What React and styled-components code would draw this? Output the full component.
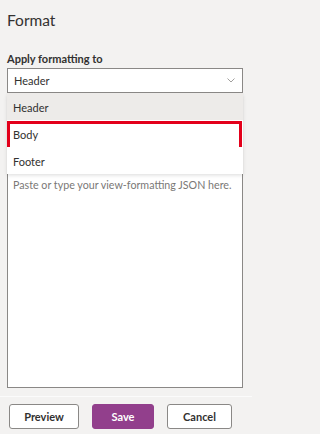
import React from "react";
import styled, { createGlobalStyle } from "styled-components";

const Global = createGlobalStyle`
  html, body { margin: 0; padding: 0; background: #f3f2f1; }
  body { font-family: "Lato", "Open Sans", sans-serif; color: #323130; }
  * { box-sizing: border-box; }
`;

const Panel = styled.div`
  width: 252px;
  height: 434px;
  background: #f3f2f1;
  display: flex;
  flex-direction: column;
  overflow: hidden;
`;

const Title = styled.h1`
  margin: 0;
  padding: 10px 0 0 7px;
  height: 50px;
  font-family: "Lato", sans-serif;
  font-weight: 400;
  font-size: 15.5px;
  line-height: 20px;
  color: #323130;
`;

const Body = styled.div`
  flex: 1;
  display: flex;
  flex-direction: column;
  padding: 0 9px 8px 7px;
  position: relative;
`;

const Label = styled.label`
  font-family: "Lato", sans-serif;
  font-weight: 700;
  font-size: 11px;
  line-height: 18px;
  color: #323130;
`;

const Select = styled.div`
  height: 25px;
  background: #fff;
  border: 1px solid #8a8886;
  display: flex;
  align-items: center;
  justify-content: space-between;
  padding: 0 7px 0 6px;
  font-family: "Lato", sans-serif;
  font-size: 11px;
  color: #323130;
`;

const Chevron = styled.svg`
  width: 8px;
  height: 5px;
  flex: none;
`;

const TextArea = styled.div`
  flex: 1;
  margin-top: 6px;
  background: #fff;
  border: 1px solid #8a8886;
  padding: 77px 5px 0 5px;
  font-family: "Lato", sans-serif;
  font-size: 10.7px;
  line-height: 16px;
  white-space: nowrap;
  color: #7a7876;
`;

const Menu = styled.ul`
  position: absolute;
  top: 43px;
  left: 7px;
  right: 9px;
  margin: 0;
  padding: 0;
  list-style: none;
  background: #fff;
  box-shadow: 0 1.6px 3.6px rgba(0,0,0,0.13), 0 0.3px 0.9px rgba(0,0,0,0.11);
  z-index: 2;
`;

const Option = styled.li`
  position: relative;
  height: 27px;
  display: flex;
  align-items: center;
  padding: 1px 6px 0;
  font-family: "Lato", sans-serif;
  font-size: 11px;
  color: #323130;
  background: ${p => (p.$selected ? "#edebe9" : "#fff")};
  &::after {
    content: "";
    display: ${p => (p.$highlight ? "block" : "none")};
    position: absolute;
    left: 0;
    right: 1px;
    top: 1px;
    bottom: -5px;
    border: 3px solid #e3001b;
  }
`;

const Footer = styled.div`
  height: 38px;
  border-top: 1px solid #fbfbfb;
  display: flex;
  align-items: flex-start;
  gap: 13px;
  padding: 7px 0 0 9px;
`;

const Button = styled.button`
  height: 25px;
  width: ${p => p.$w}px;
  border-radius: 3px;
  border: 1px solid ${p => (p.$primary ? "#923f8c" : "#8a8886")};
  background: ${p => (p.$primary ? "#923f8c" : "#fff")};
  color: ${p => (p.$primary ? "#fff" : "#323130")};
  font-family: "Lato", sans-serif;
  font-weight: 700;
  font-size: 11px;
  padding: 0;
`;

export default function App() {
  return (
    <>
      <Global />
      <Panel>
        <Title>Format</Title>
        <Body>
          <Label>Apply formatting to</Label>
          <Select>
            <span>Header</span>
            <Chevron viewBox="0 0 8 5">
              <path d="M0.5 0.5 L4 4 L7.5 0.5" fill="none" stroke="#a19f9d" strokeWidth="1" />
            </Chevron>
          </Select>
          <TextArea>Paste or type your view-formatting JSON here.</TextArea>
          <Menu>
            <Option $selected>Header</Option>
            <Option $highlight>Body</Option>
            <Option>Footer</Option>
          </Menu>
        </Body>
        <Footer>
          <Button $w={70}>Preview</Button>
          <Button $w={62} $primary>Save</Button>
          <Button $w={65}>Cancel</Button>
        </Footer>
      </Panel>
    </>
  );
}
